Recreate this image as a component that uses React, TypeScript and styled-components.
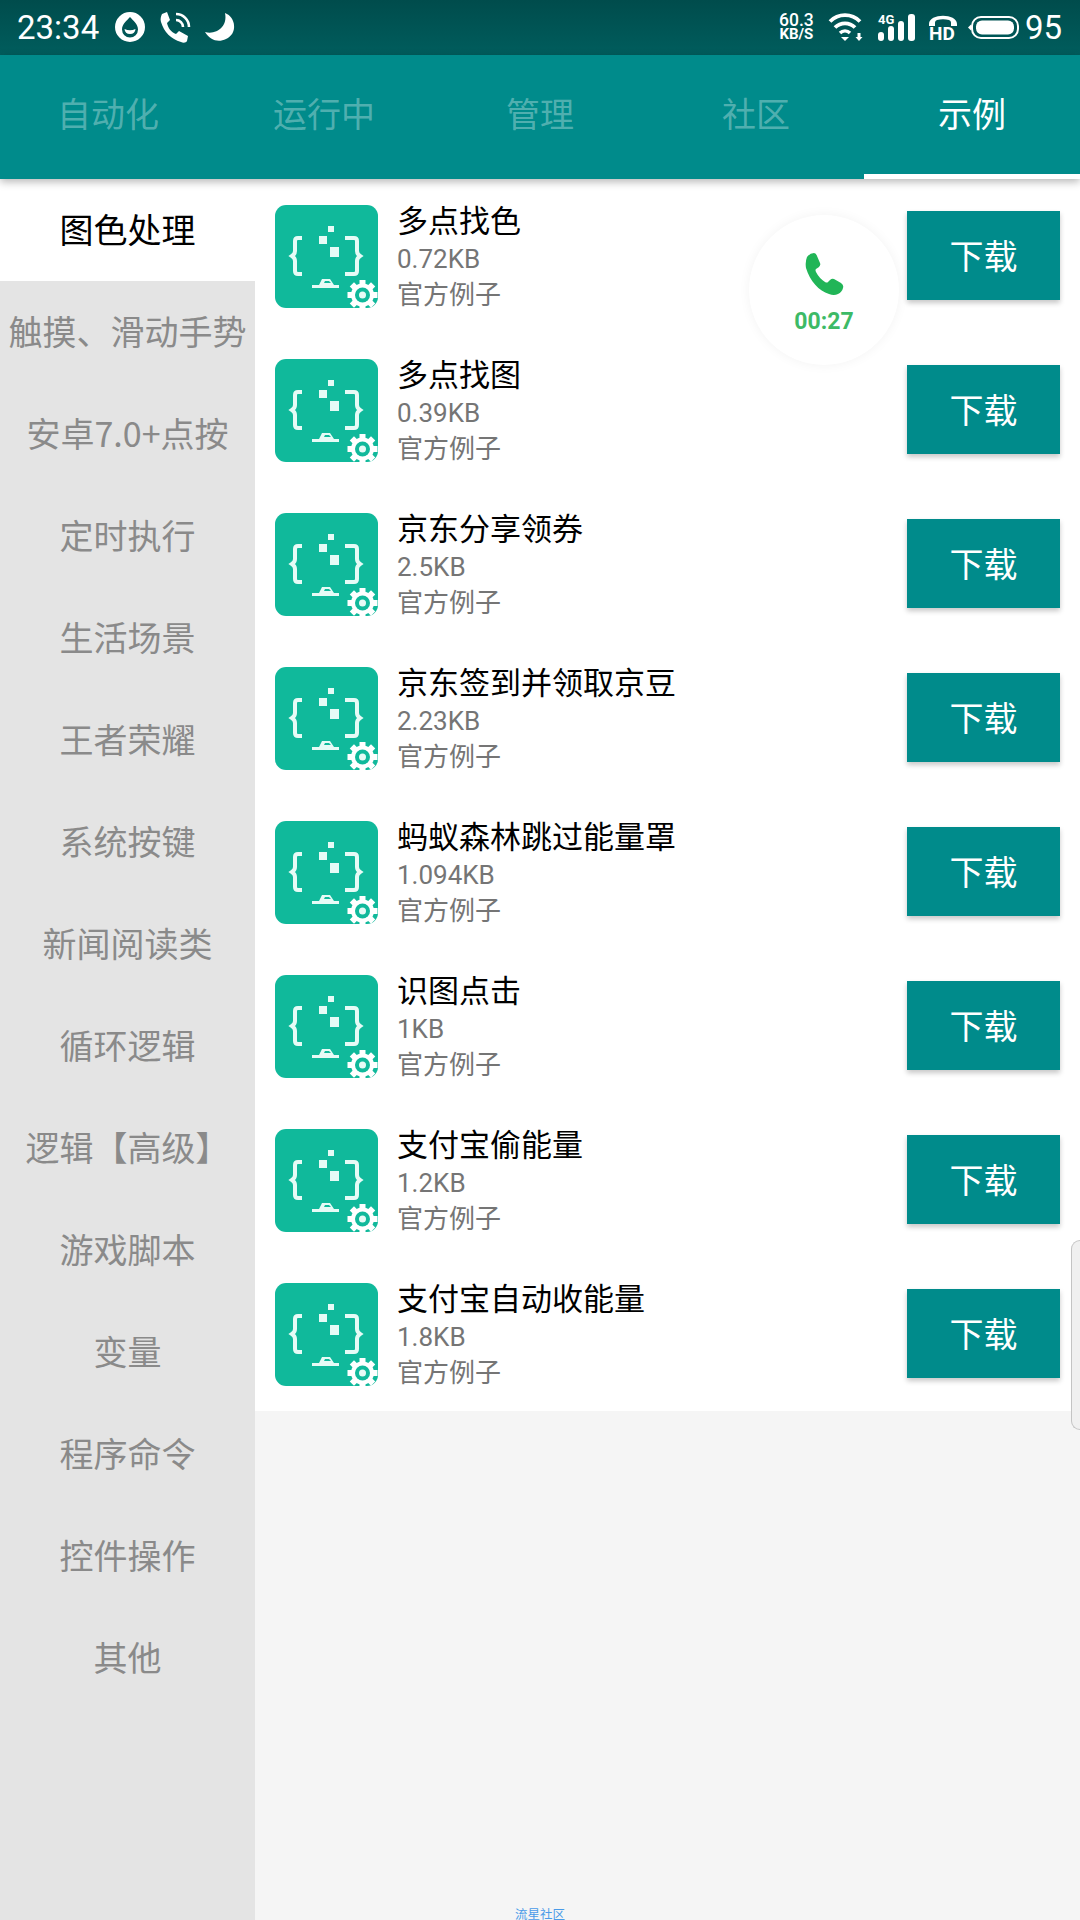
import React from "react";
import styled, { createGlobalStyle } from "styled-components";

const Global = createGlobalStyle`
  html, body { margin: 0; padding: 0; background: #f5f5f5; }
  body { font-family: "Noto Sans CJK SC", "Noto Sans", sans-serif; }
`;
const Page = styled.div`
  position: relative; width: 1080px; height: 1920px; overflow: hidden; background: #f5f5f5;
  display: flex; flex-direction: column;
`;
const StatusBar = styled.div`
  height: 55px; flex: none; display: flex; align-items: center; justify-content: space-between;
  padding: 0 18px 1px 17px; box-sizing: border-box; color: #fff;
  background: linear-gradient(180deg, #004c4c 0%, #005d5d 100%);
`;
const StatusGroup = styled.div`display: flex; align-items: center;`;
const Clock = styled.span`
  font: 400 33px/1 Roboto, sans-serif; width: 83px; margin-right: 15px; white-space: nowrap;
`;
const StatusIcon = styled.svg<{ $ml?: number }>`
  display: block; fill: #fff; overflow: visible; margin-left: ${p => p.$ml ?? 0}px;
`;
const Speed = styled.div`
  width: 35px; display: flex; flex-direction: column; align-items: center; font-family: Roboto, sans-serif;
`;
const SpeedValue = styled.span`font-size: 17.5px; font-weight: 500; line-height: 14px; white-space: nowrap;`;
const SpeedUnit = styled.span`font-size: 15px; font-weight: 700; line-height: 14px; white-space: nowrap;`;
const BatteryNumber = styled.span`font: 400 33px/1 Roboto, sans-serif; margin-left: 6px;`;
const Header = styled.div`
  position: relative; z-index: 2; height: 124px; flex: none; display: flex; background: #008b8b;
  box-shadow: 0 3px 8px rgba(0,0,0,.28);
`;
const Tab = styled.div<{ $active?: boolean }>`
  flex: 1; display: flex; align-items: center; justify-content: center; padding-bottom: 4px;
  font-size: 34px; color: ${p => (p.$active ? "#fff" : "rgba(255,255,255,.33)")};
  border-bottom: 5px solid ${p => (p.$active ? "#fff" : "transparent")};
`;
const Body = styled.div`flex: 1; display: flex; min-height: 0;`;
const Sidebar = styled.div`width: 255px; flex: none; background: #e4e4e4;`;
const SideItem = styled.div<{ $active?: boolean }>`
  height: 102px; box-sizing: border-box; padding-bottom: 4px;
  display: flex; align-items: center; justify-content: center; white-space: nowrap;
  font-size: 34px; color: ${p => (p.$active ? "#000" : "#8a8a8a")};
  background: ${p => (p.$active ? "#fff" : "transparent")};
`;
const Content = styled.div`flex: 1; min-width: 0;`;
const List = styled.div`background: #fff;`;
const Row = styled.div`
  height: 154px; display: flex; align-items: center; padding: 0 20px; box-sizing: border-box;
`;
const AppIcon = styled.svg`width: 103px; height: 103px; flex: none; display: block;`;
const Info = styled.div`flex: 1; margin-left: 19px; margin-top: -3px;`;
const Title = styled.div`font-size: 31px; line-height: 46px; color: #000;`;
const Sub = styled.div`font: 400 26px/35.5px Roboto, "Noto Sans CJK SC", sans-serif; color: #757575;`;
const Button = styled.div`
  width: 153px; height: 89px; margin-top: -2px; box-sizing: border-box; padding-bottom: 2px;
  display: flex; align-items: center; justify-content: center;
  background: #008b8b; color: #fff; font-size: 34px; box-shadow: 0 3px 5px rgba(0,0,0,.22);
`;
const CallBubble = styled.div`
  position: absolute; left: 749px; top: 215px; width: 150px; height: 150px; border-radius: 50%;
  background: #fff; box-shadow: 0 0 12px rgba(0,0,0,.05); z-index: 3;
  display: flex; flex-direction: column; align-items: center; padding-top: 38px; box-sizing: border-box;
`;
const CallTime = styled.div`font: 700 23px/1 Roboto, sans-serif; color: #3dba66; margin-top: 15px;`;
const Handle = styled.div`
  position: absolute; right: 0; top: 1240px; width: 8px; height: 188px; z-index: 3;
  background: #f0f0f0; border: 1px solid #c4c4c4; border-right: none; border-radius: 9px 0 0 9px;
`;
const Foot = styled.div`
  position: absolute; left: 0; right: 0; top: 1906px; text-align: center;
  font-size: 12.5px; line-height: 16px; color: #4a9be8;
`;

const tabs = ["自动化", "运行中", "管理", "社区", "示例"];
const side = ["图色处理", "触摸、滑动手势", "安卓7.0+点按", "定时执行", "生活场景", "王者荣耀", "系统按键", "新闻阅读类", "循环逻辑", "逻辑【高级】", "游戏脚本", "变量", "程序命令", "控件操作", "其他"];
const rows = [
  ["多点找色", "0.72KB"], ["多点找图", "0.39KB"], ["京东分享领券", "2.5KB"], ["京东签到并领取京豆", "2.23KB"],
  ["蚂蚁森林跳过能量罩", "1.094KB"], ["识图点击", "1KB"], ["支付宝偷能量", "1.2KB"], ["支付宝自动收能量", "1.8KB"],
];
const teeth = [0, 45, 90, 135, 180, 225, 270, 315];

const ScriptIcon = () => (
  <AppIcon viewBox="0 0 103 103">
    <rect width="103" height="103" rx="11" fill="#10b99b" />
    <g fill="none" stroke="#e6fbf6" strokeWidth="4">
      <path d="M27 33h-4q-3 0-3 3v10q0 3-3 5q3 2 3 5v10q0 3 3 3h4" />
      <path d="M70 33h9q3 0 3 3v10q0 3 3 5q-3 2-3 5v10q0 3-3 3h-9" />
    </g>
    <g fill="#e6fbf6">
      <rect x="53" y="21" width="6" height="6" />
      <rect x="44" y="31" width="8" height="8" />
      <rect x="55" y="42" width="9" height="10" />
      <path d="M37 83v-3h7l3-6h8l4 6h5v3z" />
    </g>
    <path d="M49 78l1-2h4l2 2z" fill="#10b99b" />
    <g fill="#fff">
      <circle cx="87.500" cy="90" r="11.500" />
      {teeth.map(a => (
        <rect key={a} x="84.500" y="75" width="6" height="6" transform={`rotate(${a} 87.5 90)`} />
      ))}
    </g>
    <circle cx="87.500" cy="90" r="7.500" fill="#10b99b" />
    <circle cx="87.500" cy="90" r="3.500" fill="#e6fbf6" />
  </AppIcon>
);

export default function App() {
  return (
    <Page>
      <Global />
      <StatusBar>
        <StatusGroup>
          <Clock>23:34</Clock>
          <StatusIcon width="30" height="30" viewBox="0 0 30 30">
            <path fillRule="evenodd" d="M15 0a15 15 0 1 0 0 30a15 15 0 0 0 0-30zM15 5c3 3.500 8 7 8 12.500a8 8 0 0 1-16 0c0-5.500 5-9 8-12.500z" />
            <path d="M9.500 17q5.500 2.500 11 0q-.5 5-5.500 5t-5.500-5z" />
          </StatusIcon>
          <StatusIcon $ml={15} width="30" height="30" viewBox="0 0 30 30">
            <path d="M2 2l5-2 3 8-3 3c1 5 4 9 9 11l3-3 9 5-1 5c-1 2-4 2-6 1C11 27 4 20 1 10c-1-3 0-6 1-8z" />
            <path d="M16 2a13 13 0 0 1 13 13M16 8a7 7 0 0 1 7 7" fill="none" stroke="#fff" strokeWidth="2.600" />
          </StatusIcon>
          <StatusIcon $ml={15} width="30" height="28" viewBox="0 0 30 28">
            <path d="M20 0C31 4 33 21 21 26C13 30 5 27 0 19C11 22 23 14 20 0z" />
          </StatusIcon>
        </StatusGroup>
        <StatusGroup>
          <Speed>
            <SpeedValue>60.3</SpeedValue>
            <SpeedUnit>KB/S</SpeedUnit>
          </Speed>
          <StatusIcon $ml={14} width="35" height="28" viewBox="0 0 35 28">
            <path d="M2 8.500a21 21 0 0 1 30 0" fill="none" stroke="#fff" strokeWidth="3.800" />
            <path d="M7 14.500a14 14 0 0 1 20 0" fill="none" stroke="#fff" strokeWidth="3.800" />
            <path d="M12 20a7 7 0 0 1 10 0" fill="none" stroke="#fff" strokeWidth="3.400" />
            <path d="M13 24h8l-4 4zM29.500 20h3v4h2l-3.500 4-3.500-4h2z" />
          </StatusIcon>
          <StatusIcon $ml={14} width="38" height="27" viewBox="0 0 38 27">
            <text x="1" y="10" fontFamily="Roboto" fontSize="13" fontWeight="700" fill="#fff">4G</text>
            <rect x="1" y="18" width="6" height="9" rx="3" />
            <rect x="11" y="12" width="6" height="15" rx="3" />
            <rect x="21" y="7" width="6" height="20" rx="3" />
            <rect x="31" y="0" width="7" height="27" rx="3" />
          </StatusIcon>
          <StatusIcon $ml={14} width="28" height="25" viewBox="0 0 28 25">
            <path d="M0 9C0 -2 28 -2 28 9v2h-6V7.500q0-2-2-2.500q-6-1.500-12 0q-2 .5-2 2.500V11H0z" />
            <text x="0" y="25" fontFamily="Roboto" fontSize="19" fontWeight="700" fill="#fff">HD</text>
          </StatusIcon>
          <StatusIcon $ml={11} width="51" height="23" viewBox="0 0 51 23">
            <path d="M0 11.500l3-3v6z" />
            <rect x="4" y="1" width="46" height="21" rx="9" fill="none" stroke="#fff" strokeWidth="2" />
            <rect x="8" y="4.500" width="38" height="14" rx="6" />
          </StatusIcon>
          <BatteryNumber>95</BatteryNumber>
        </StatusGroup>
      </StatusBar>
      <Header>
        {tabs.map((t, i) => <Tab key={t} $active={i === 4}>{t}</Tab>)}
      </Header>
      <Body>
        <Sidebar>
          {side.map((s, i) => <SideItem key={s} $active={i === 0}>{s}</SideItem>)}
        </Sidebar>
        <Content>
          <List>
            {rows.map(([t, s]) => (
              <Row key={t}>
                <ScriptIcon />
                <Info>
                  <Title>{t}</Title>
                  <Sub>{s}</Sub>
                  <Sub>官方例子</Sub>
                </Info>
                <Button>下载</Button>
              </Row>
            ))}
          </List>
        </Content>
      </Body>
      <CallBubble>
        <svg width="39" height="42" viewBox="0 0 39 42">
          <path d="M2 4Q5 0 9 0q2 0 3 3l3 7q1 2-1 4l-3 2q-1 1 0 3q3 6 9 10q2 1 3 0l2-2q2-2 4-1l7 4q3 2 2 5q-1 4-5 6q-4 2-9 0C14 38 5 28 1 15Q0 9 2 4z" fill="#21b557" />
        </svg>
        <CallTime>00:27</CallTime>
      </CallBubble>
      <Handle />
      <Foot>流星社区</Foot>
    </Page>
  );
}
